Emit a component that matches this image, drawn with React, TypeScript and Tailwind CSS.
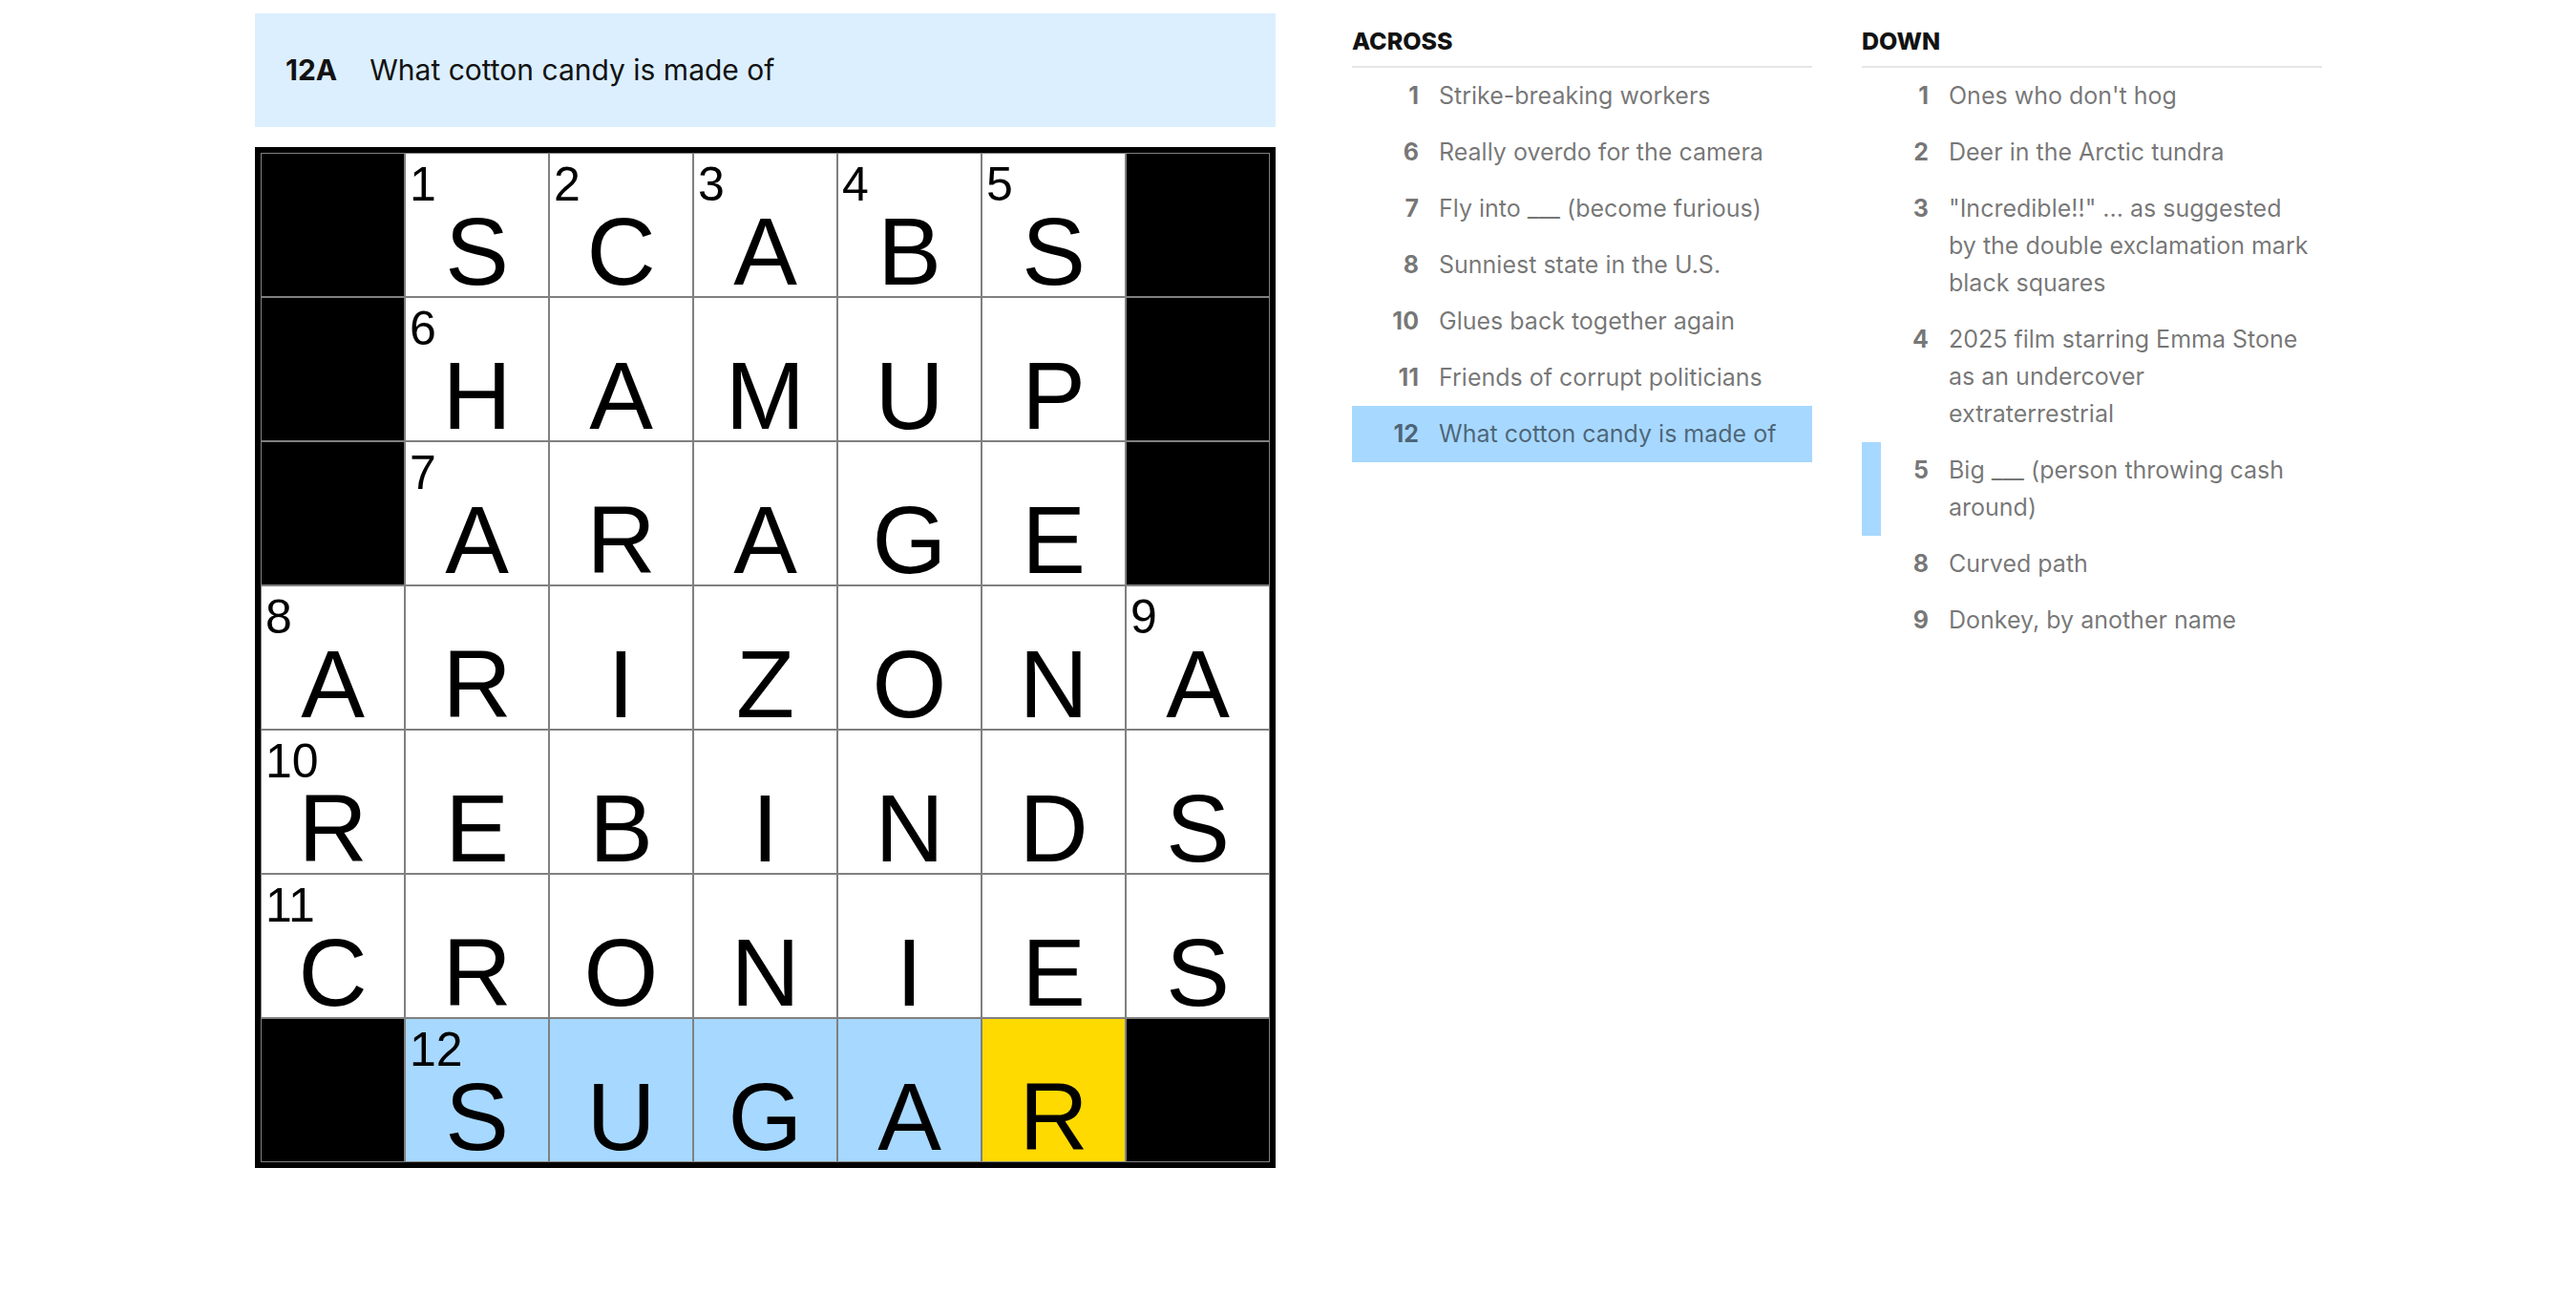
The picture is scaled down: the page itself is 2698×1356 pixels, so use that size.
const ROWS = ["#SCABS#", "#HAMUP#", "#ARAGE#", "ARIZONA", "REBINDS", "CRONIES", "#SUGAR#"];

const NUMBERS: Record<string, number> = {
  "0-1": 1,
  "0-2": 2,
  "0-3": 3,
  "0-4": 4,
  "0-5": 5,
  "1-1": 6,
  "2-1": 7,
  "3-0": 8,
  "3-6": 9,
  "4-0": 10,
  "5-0": 11,
  "6-1": 12,
};

type Clue = { n: number; text: string; active?: boolean; related?: boolean };

const ACROSS: Clue[] = [
  { n: 1, text: "Strike-breaking workers" },
  { n: 6, text: "Really overdo for the camera" },
  { n: 7, text: "Fly into ___ (become furious)" },
  { n: 8, text: "Sunniest state in the U.S." },
  { n: 10, text: "Glues back together again" },
  { n: 11, text: "Friends of corrupt politicians" },
  { n: 12, text: "What cotton candy is made of", active: true },
];

const DOWN: Clue[] = [
  { n: 1, text: "Ones who don't hog" },
  { n: 2, text: "Deer in the Arctic tundra" },
  { n: 3, text: "\"Incredible!!\" ... as suggested by the double exclamation mark black squares" },
  { n: 4, text: "2025 film starring Emma Stone as an undercover extraterrestrial" },
  { n: 5, text: "Big ___ (person throwing cash around)", related: true },
  { n: 8, text: "Curved path" },
  { n: 9, text: "Donkey, by another name" },
];

function cellBg(ch: string, r: number, c: number) {
  if (ch === "#") return "bg-black";
  if (r === 6 && c === 5) return "bg-[#ffda00]";
  if (r === 6) return "bg-[#a7d8ff]";
  return "bg-white";
}

function Cell({ ch, r, c }: { ch: string; r: number; c: number }) {
  const num = NUMBERS[`${r}-${c}`];
  return (
    <div className={`relative h-[151px] border border-[#808080] ${cellBg(ch, r, c)}`}>
      {num && (
        <span className="absolute left-[4px] top-[7px] text-[50px] leading-none text-black">{num}</span>
      )}
      {ch !== "#" && (
        <span className="absolute inset-x-0 top-[52px] text-center text-[100px] leading-none text-black">{ch}</span>
      )}
    </div>
  );
}

function ClueList({ title, clues }: { title: string; clues: Clue[] }) {
  return (
    <section className="w-[482px]">
      <h3 className="border-b-2 border-[#e6e6e6] pt-[28px] pb-[11px] text-[25px] leading-[30px] font-extrabold text-[#121212]">
        {title}
      </h3>
      <ol>
        {clues.map((clue) => {
          let tone = "border-transparent";
          if (clue.active) tone = "border-[#a7d8ff] bg-[#a7d8ff]";
          else if (clue.related) tone = "border-[#a7d8ff]";
          return (
            <li key={clue.n} className={`flex border-l-[20px] py-[10px] pr-[12px] text-[25px] leading-[39px] text-black/55 ${tone}`}>
              <span className="w-[50px] shrink-0 text-right font-bold">{clue.n}</span>
              <span className="ml-[21px]">{clue.text}</span>
            </li>
          );
        })}
      </ol>
    </section>
  );
}

export default function App() {
  return (
    <div className="min-h-screen bg-white font-[Inter,sans-serif]">
      <div className="mx-auto flex w-[2164px] items-start gap-[80px]">
        {/* Board */}
        <div className="w-[1069px] pt-[14px]">
          <div className="flex h-[119px] items-center bg-[#dcefff] pl-[32px] text-[30px] text-[#121212]">
            <span className="mr-[34px] font-bold">12A</span>
            <span>What cotton candy is made of</span>
          </div>
          <div className="mt-[21px] grid grid-cols-[repeat(7,151px)] border-[6px] border-black font-['Liberation_Sans',Arial,sans-serif]">
            {ROWS.map((row, r) =>
              row.split("").map((ch, c) => <Cell key={`${r}-${c}`} ch={ch} r={r} c={c} />)
            )}
          </div>
        </div>

        {/* Clues */}
        <div className="flex gap-[52px]">
          <ClueList title="ACROSS" clues={ACROSS} />
          <ClueList title="DOWN" clues={DOWN} />
        </div>
      </div>
    </div>
  );
}
